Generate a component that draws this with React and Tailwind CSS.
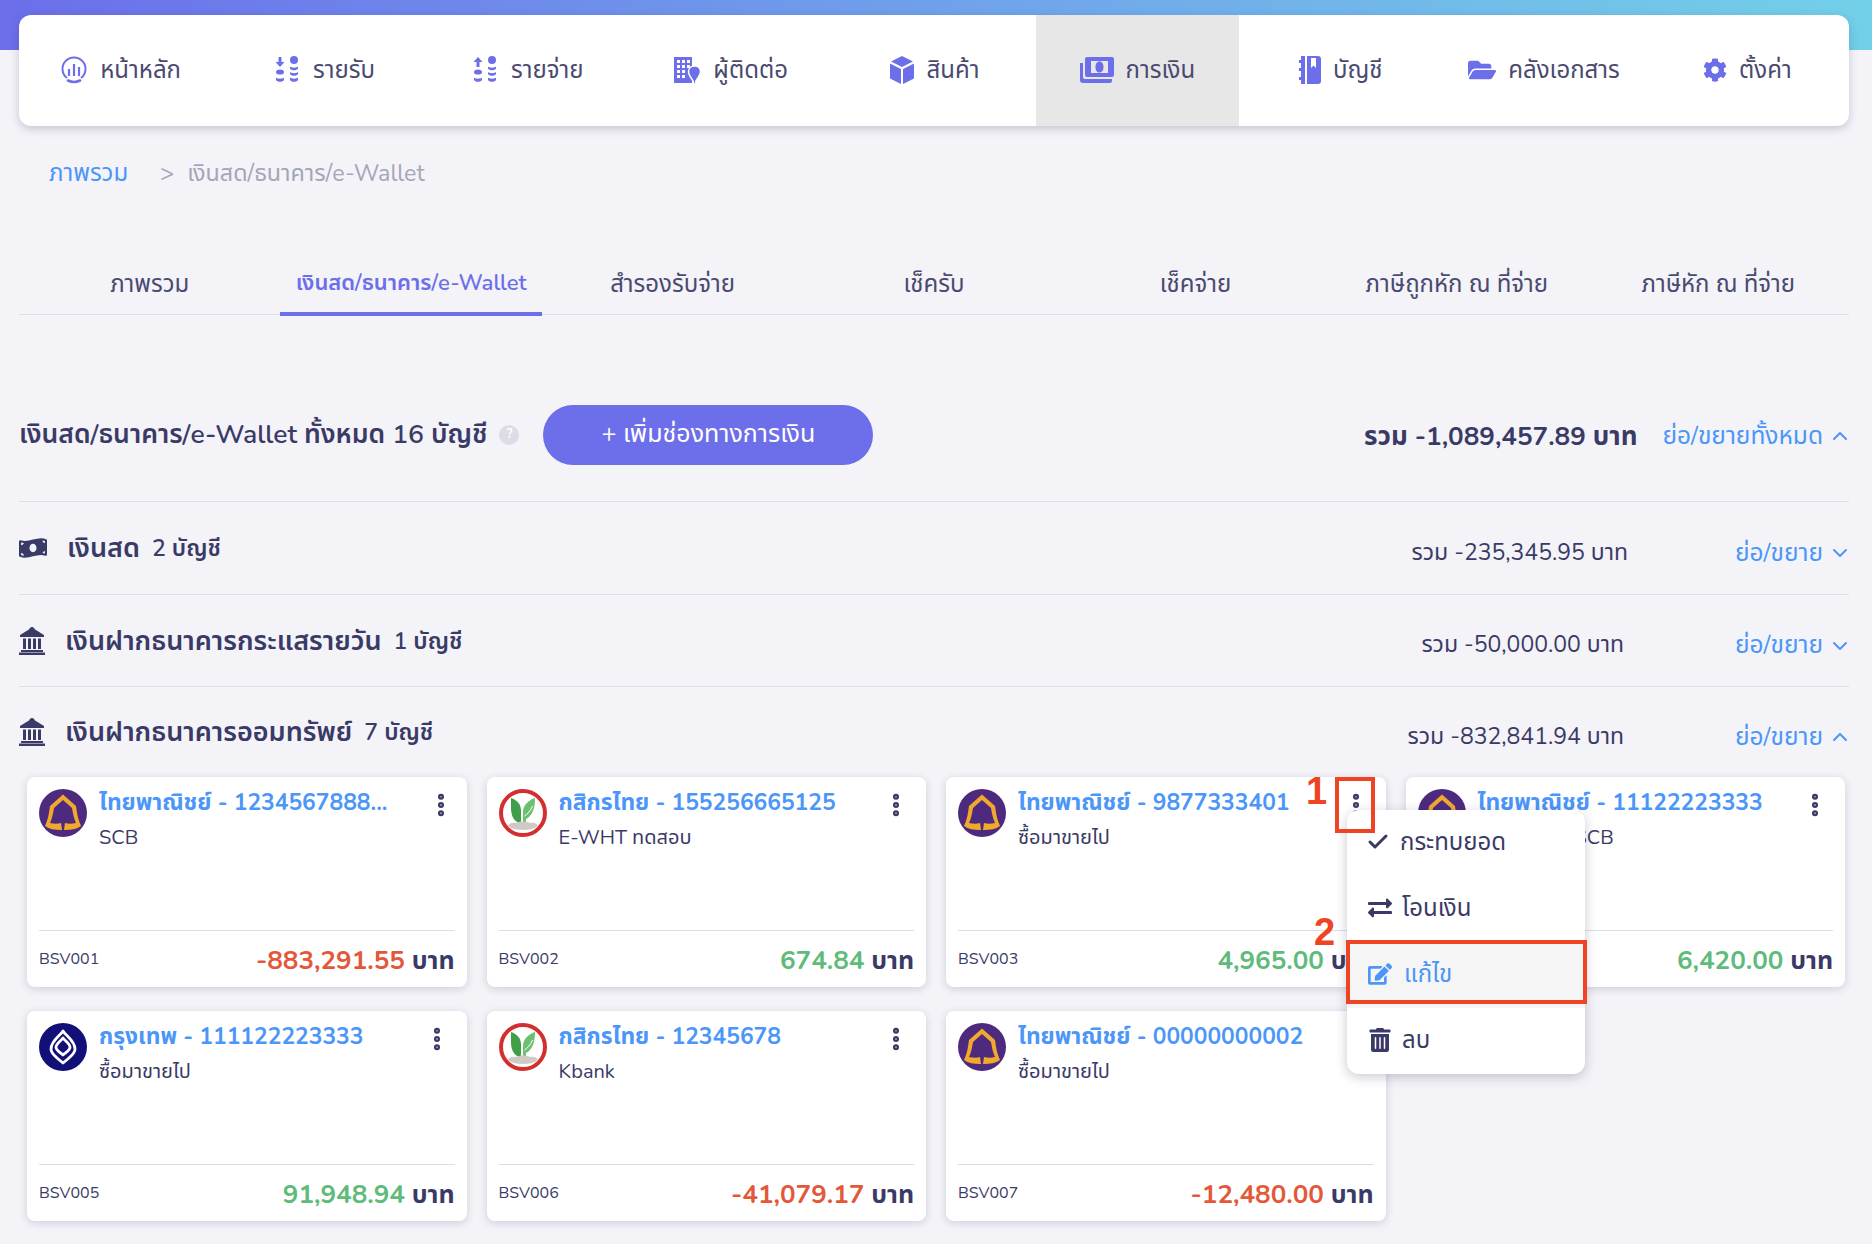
import { Check, ChevronDown, ChevronUp, EllipsisVertical } from "lucide-react";
import { FaFolderOpen, FaCog, FaMoneyBillWave, FaTrashAlt, FaEdit, FaExchangeAlt } from "react-icons/fa";

const FONT = "font-['Nunito','Noto_Sans','Noto_Sans_Thai','Lato',sans-serif]";

// nav pictograms drawn to match the app's own icon set
function CoinsDown({ up }) {
  return (
    <svg viewBox="0 0 28 28" className="w-7 h-7" fill="#6c6eea">
      <path d={up ? "M7 1l4.500 5H8.500v5h-3V6H2.500z" : "M5.500 1h3v5h3L7 11 2.500 6h3z"} />
      <ellipse cx="7" cy="16" rx="4" ry="2.600" />
      <path d="M3 21.500c1 1.600 7 1.600 8 0V24c-1 2.400-7 2.400-8 0z" />
      <circle cx="21" cy="4" r="4" />
      <path d="M17 10.500c1 1.500 7 1.500 8 0v2c-1 2.400-7 2.400-8 0zM17 16c1 1.500 7 1.500 8 0v2c-1 2.400-7 2.400-8 0zM17 21.500c1 1.500 7 1.500 8 0V24c-1 2.400-7 2.400-8 0z" />
    </svg>
  );
}

function Dash() {
  return (
    <svg viewBox="0 0 28 28" className="w-7 h-7" fill="none" stroke="#6c6eea" strokeWidth="2">
      <path d="M7 22A11.500 11.500 0 1 1 21 22" />
      <path d="M8 24.500c3.600 1.800 8.400 1.800 12 0" strokeWidth="2.600" strokeLinecap="round" />
      <path d="M9 13v7M14 8v12M19 11v9" strokeWidth="2.200" />
    </svg>
  );
}

function BuildingPin() {
  return (
    <svg viewBox="0 0 28 28" className="w-7 h-7">
      <path fill="#6c6eea" fillRule="evenodd" d="M1 1h18v26H1zM4 4v3h3V4zM9 4v3h3V4zM14 4v3h3V4zM4 9v3h3V9zM9 9v3h3V9zM14 9v3h3V9zM4 14v3h3v-3zM9 14v3h3v-3zM4 19v3h3v-3zM9 19v3h3v-3z" />
      <path fill="#6c6eea" stroke="#fff" strokeWidth="1.500" d="M21.500 10c3.600 0 6 2.600 6 5.800 0 3.400-3.600 7.400-4.700 9.500l-.3 2.700h-2l-.3-2.700c-1.100-2.100-4.700-6.100-4.700-9.500 0-3.200 2.400-5.800 6-5.800z" />
    </svg>
  );
}

function Cube() {
  return (
    <svg viewBox="0 0 26 28" className="w-[26px] h-7" fill="#6c6eea">
      <path d="M13 0l11 5.500L13 11 2 5.500z" />
      <path d="M1 7.500l11 5.500v15L1 22.500zM25 7.500L14 13v15l11-5.500z" />
    </svg>
  );
}

function MoneyStack() {
  return (
    <svg viewBox="0 0 34 28" className="w-[34px] h-7" fill="#6c6eea">
      <path fillRule="evenodd" d="M7 1h25a2 2 0 0 1 2 2v16a2 2 0 0 1-2 2H7a2 2 0 0 1-2-2V3a2 2 0 0 1 2-2zM11 5v12h17V5zM19.500 5.500c2.800 0 4 2.500 4 5.500s-1.200 5.500-4 5.500-4-2.500-4-5.500 1.200-5.500 4-5.500z" />
      <path d="M0 7h3v14a2 2 0 0 0 2 2h27v2a2 2 0 0 1-2 2H3a3 3 0 0 1-3-3z" />
    </svg>
  );
}

function AccountBook() {
  return (
    <svg viewBox="0 0 22 28" className="w-[22px] h-7" fill="#6c6eea">
      <path fillRule="evenodd" d="M8 0h11a3 3 0 0 1 3 3v22a3 3 0 0 1-3 3H8zM12 2v10l2.500-2.500L17 12V2z" />
      <path d="M2 0h4v28H2zM0 4h2v3H0zM0 12h2v3H0zM0 21h2v3H0z" />
    </svg>
  );
}

function Bank() {
  return (
    <svg viewBox="0 0 26 28" className="w-[26px] h-7 shrink-0" fill="#3a3a66">
      <path d="M13 0c1.500 0 2.500 1 2.700 2.300L25 8v2H1V8l9.300-5.700C10.500 1 11.500 0 13 0z" />
      <path d="M4 11.500h3V22H4zM9 11.500h3V22H9zM14 11.500h3V22h-3zM19 11.500h3V22h-3zM2 23h22v2H2zM0 25.500h26V28H0z" />
    </svg>
  );
}

function ScbLogo() {
  return (
    <svg viewBox="0 0 48 48" className="w-12 h-12 shrink-0">
      <circle cx="24" cy="24" r="24" fill="#4e2a7f" />
      <path fill="#f0a92d" d="M24 5.500L37 17c1 7 2 14 5 20-4 3-10 4-16 4h-4c-6 0-12-1-16-4 3-6 4-13 5-20z" />
      <path fill="#4e2a7f" d="M24 11l9 8c1 6 2 11 4 15-4 1-8 1-11 0l-1 7h-2l-1-7c-3 1-7 1-11 0 2-4 3-9 4-15z" />
    </svg>
  );
}

function KbankLogo() {
  return (
    <svg viewBox="0 0 48 48" className="w-12 h-12 shrink-0">
      <circle cx="24" cy="24" r="22" fill="#fff" stroke="#d32f2f" strokeWidth="4" />
      <path fill="#3f9e48" d="M12 9c6 2 10 6 10 13v12h-2c-5-2-8-7-8-15z" />
      <path fill="#6cc070" d="M36 9c0 11-3 18-9 21v4h-3V22c1-7 6-11 12-13z" />
      <path fill="none" stroke="#fff" strokeWidth="1" d="M25.500 27c3-2 6-5 8-10" />
      <path fill="#cfcac3" d="M9 37c1-3 5-4 8-3 3-2 11-2 14 0 3-1 7 0 8 3-4 3-9 4-15 4s-11-1-15-4z" />
    </svg>
  );
}

function BblLogo() {
  return (
    <svg viewBox="0 0 48 48" className="w-12 h-12 shrink-0">
      <circle cx="24" cy="24" r="24" fill="#120f78" />
      <g fill="none" stroke="#fff" strokeWidth="2.800" strokeLinejoin="round">
        <path d="M24 8c3 5 12 10 12 18 0 4-3 6-6 9l-6 5-6-5c-3-3-6-5-6-9 0-8 9-13 12-18z" />
        <path d="M24 15c2.500 3.500 7 5.500 7 9.500 0 2.500-3 4-7 7.500-4-3.500-7-5-7-7.500 0-4 4.500-6 7-9.500z" />
      </g>
    </svg>
  );
}

const navIcon = "w-7 h-7 text-[#6c6eea]";
const navItems = [
  { label: "หน้าหลัก", icon: <Dash /> },
  { label: "รายรับ", icon: <CoinsDown /> },
  { label: "รายจ่าย", icon: <CoinsDown up /> },
  { label: "ผู้ติดต่อ", icon: <BuildingPin /> },
  { label: "สินค้า", icon: <Cube /> },
  { label: "การเงิน", icon: <MoneyStack />, active: true },
  { label: "บัญชี", icon: <AccountBook /> },
  { label: "คลังเอกสาร", icon: <FaFolderOpen className={navIcon} /> },
  { label: "ตั้งค่า", icon: <FaCog className="w-6 h-7 text-[#6c6eea]" /> },
];

const tabs = ["ภาพรวม", "เงินสด/ธนาคาร/e-Wallet", "สำรองรับจ่าย", "เช็ครับ", "เช็คจ่าย", "ภาษีถูกหัก ณ ที่จ่าย", "ภาษีหัก ณ ที่จ่าย"];

const cards = [
  { logo: <ScbLogo />, title: "ไทยพาณิชย์ - 1234567888...", sub: "SCB", code: "BSV001", amount: "-883,291.55", dots: "mr-0" },
  { logo: <KbankLogo />, title: "กสิกรไทย - 155256665125", sub: "E-WHT ทดสอบ", code: "BSV002", amount: "674.84" },
  { logo: <ScbLogo />, title: "ไทยพาณิชย์ - 9877333401", sub: "ซื้อมาขายไป", code: "BSV003", amount: "4,965.00" },
  { logo: <ScbLogo />, title: "ไทยพาณิชย์ - 11122223333", sub: "ซื้อมาขายไป SCB", code: "BSV004", amount: "6,420.00" },
  { logo: <BblLogo />, title: "กรุงเทพ - 111122223333", sub: "ซื้อมาขายไป", code: "BSV005", amount: "91,948.94" },
  { logo: <KbankLogo />, title: "กสิกรไทย - 12345678", sub: "Kbank", code: "BSV006", amount: "-41,079.17" },
  { logo: <ScbLogo />, title: "ไทยพาณิชย์ - 00000000002", sub: "ซื้อมาขายไป", code: "BSV007", amount: "-12,480.00" },
];

function AccountCard({ card }) {
  const negative = card.amount.startsWith("-");
  return (
    <div className="h-[210px] bg-white rounded-lg shadow-[0_2px_8px_rgba(40,40,80,0.18)] px-3 pt-3 flex flex-col">
      <div className="flex gap-3 h-[141px]">
        {card.logo}
        <div className="flex-1 min-w-0">
          <p className="text-[22.800px] leading-7 font-bold text-[#4b96f8] whitespace-nowrap">{card.title}</p>
          <p className="text-[20px] leading-6 mt-[9px] text-[#3a3a66]">{card.sub}</p>
        </div>
        <EllipsisVertical className={`w-7 h-7 mt-[2px] shrink-0 text-[#3a3a66] ${card.dots || "mr-1"}`} strokeWidth={3.2} />
      </div>
      <div className="border-t border-[#dddde9] flex items-center justify-between h-[57px]">
        <span className="text-[16px] text-[#3a3a66]">{card.code}</span>
        <span className="mt-1 text-[25px] font-bold text-[#3a3a66]">
          <span className={`text-[26px] ${negative ? "text-[#e4583a]" : "text-[#5fbb79]"}`}>{card.amount}</span> บาท
        </span>
      </div>
    </div>
  );
}

function SectionRow({ icon, title, count, total, open, height, totalShift }) {
  return (
    <div className={`${height} border-t border-[#dddde4] flex items-center text-[#3a3a66]`}>
      {icon}
      <span className="ml-5 mt-[3px] text-[27px] font-semibold">{title}</span>
      <span className="ml-3 mt-[3px] text-[23px] font-semibold">{count}</span>
      <span className={`ml-auto mt-[10px] text-[23px] text-right ${totalShift || ""}`}>{total}</span>
      <span className="w-[225px] mt-[10px] flex items-center justify-end gap-[5px] text-[24.500px] text-[#4b96f8]">
        ย่อ/ขยาย
        {open ? <ChevronUp className="w-6 h-6 mr-[-3px]" /> : <ChevronDown className="w-6 h-6 mr-[-3px]" />}
      </span>
    </div>
  );
}

export default function App() {
  return (
    <div className={`relative min-h-[1244px] bg-[#f3f3f8] overflow-hidden ${FONT}`}>
      <div className="h-[50px] bg-gradient-to-r from-[#6c6eea] to-[#72d0e8]" />
      <div className="pl-[19px] pr-[23px] mt-[-35px]">
        <nav className="relative h-[111px] grid grid-cols-9 bg-white rounded-xl shadow-[0_3px_8px_rgba(40,40,80,0.22)] overflow-hidden">
          {navItems.map((item) => (
            <div key={item.label} className={`flex items-center justify-center gap-3 pb-[2px] text-[24px] text-[#4a4a70] ${item.active ? "bg-[#e7e7e7]" : ""}`}>
              {item.icon}
              {item.label}
            </div>
          ))}
        </nav>

        <div className="mt-6 ml-[30px] h-[46px] flex items-center text-[23.300px] text-[#a5a5b8]">
          <span className="text-[24px] text-[#4b96f8]">ภาพรวม</span>
          <span className="ml-8">&gt;</span>
          <span className="ml-[13px]">เงินสด/ธนาคาร/e-Wallet</span>
        </div>

        <div className="mt-[55px] h-[64px] grid grid-cols-7 border-b border-[#dddde4] text-[24px] text-[#4a4a70]">
          {tabs.map((t, i) => (
            <div key={t} className={`flex items-center justify-center ${i === 1 ? "border-b-4 border-[#6c6eea] text-[#6c6eea] text-[22px] font-semibold h-[65px] pt-1" : ""}`}>
              {t}
            </div>
          ))}
        </div>

        <div className="mt-[90px] h-[60px] mb-[36px] flex items-center text-[#3a3a66]">
          <h2 className="text-[26.500px] font-semibold">เงินสด/ธนาคาร/e-Wallet ทั้งหมด 16 บัญชี</h2>
          <span className="ml-3 w-5 h-5 rounded-full bg-[#dcdce6] text-white text-[13px] font-bold flex items-center justify-center">?</span>
          <button className="ml-[24px] w-[330px] h-[60px] rounded-full bg-[#6c6eea] text-white text-[25px]">+ เพิ่มช่องทางการเงิน</button>
          <span className="ml-auto mt-[2px] text-[26px] font-bold">รวม -1,089,457.89 บาท</span>
          <span className="ml-[25px] mt-[2px] flex items-center gap-[5px] text-[24.500px] text-[#4b96f8]">
            ย่อ/ขยายทั้งหมด
            <ChevronUp className="w-6 h-6 mr-[-3px]" />
          </span>
        </div>

        <SectionRow icon={<FaMoneyBillWave className="w-7 h-7" />} height="h-[93px]" title="เงินสด" count="2 บัญชี" total="รวม -235,345.95 บาท" totalShift="mr-[-4px]" />
        <SectionRow icon={<Bank />} height="h-[92px]" title="เงินฝากธนาคารกระแสรายวัน" count="1 บัญชี" total="รวม -50,000.00 บาท" />
        <SectionRow icon={<Bank />} height="h-[91px]" title="เงินฝากธนาคารออมทรัพย์" count="7 บัญชี" total="รวม -832,841.94 บาท" open />

        <div className="ml-2 w-[1818px] grid grid-cols-4 gap-x-5 gap-y-6">
          {cards.map((c) => (
            <AccountCard key={c.code} card={c} />
          ))}
        </div>
      </div>

      {/* row menu opened over the cards */}
      <div className="absolute left-[1347px] top-[810px] w-[238px] h-[264px] bg-white rounded-xl shadow-[0_3px_12px_rgba(40,40,80,0.25)] text-[24px] text-[#3a3a66] flex flex-col overflow-hidden">
        <div className="h-[66px] flex items-center gap-[10px] pl-[19px] pb-[2px]"><Check className="w-6 h-6" strokeWidth={3} />กระทบยอด</div>
        <div className="h-[66px] flex items-center gap-[10px] pl-[21px] pb-[2px]"><FaExchangeAlt className="w-6 h-6" />โอนเงิน</div>
        <div className="h-[66px] flex items-center gap-3 pl-[21px] pb-[2px] bg-[#f5f5f5] text-[#4b96f8]"><FaEdit className="w-6 h-6" />แก้ไข</div>
        <div className="h-[66px] flex items-center gap-[10px] pl-[21px] pb-[2px]"><FaTrashAlt className="w-6 h-6" />ลบ</div>
      </div>

      {/* tutorial annotations */}
      <div className="absolute left-[1335px] top-[777px] w-10 h-14 border-4 border-[#ef4423]" />
      <div className="absolute left-[1346px] top-[940px] w-[241px] h-16 border-4 border-[#ef4423]" />
      <span className="absolute left-[1306px] top-[771px] text-[38px] leading-10 font-bold font-['Liberation_Sans',sans-serif] text-[#ef4423]">1</span>
      <span className="absolute left-[1314px] top-[912px] text-[38px] leading-10 font-bold font-['Liberation_Sans',sans-serif] text-[#ef4423]">2</span>
    </div>
  );
}
